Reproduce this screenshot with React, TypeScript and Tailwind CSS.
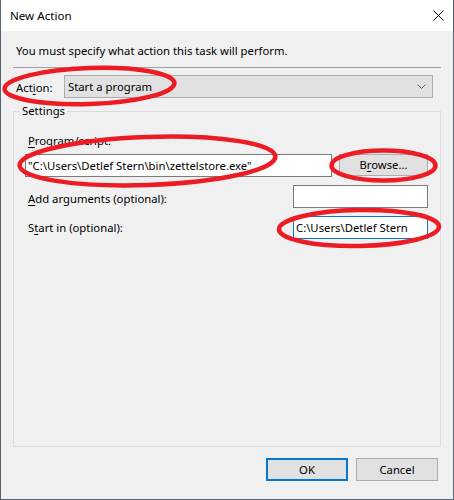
import React from 'react';

const Key: React.FC<{ children: React.ReactNode }> = ({ children }) => (
  <span className="underline underline-offset-[2px] decoration-1">{children}</span>
);

const TextBox: React.FC<{ value?: string; focused?: boolean; className?: string }> = ({
  value,
  focused,
  className,
}) => (
  <div
    className={`h-[23px] bg-white border flex items-center pl-[2px] overflow-hidden whitespace-nowrap ${
      focused ? 'border-[#0078d7]' : 'border-[#7a7a7a]'
    } ${className ?? ''}`}
  >
    {value}
  </div>
);

export default function App() {
  return (
    <div className="relative w-[454px] h-[500px] flex flex-col bg-[#f0f0f0] border-l border-r border-b border-[#5a6470] font-['Noto_Sans','Segoe_UI',sans-serif] text-[11.3px] leading-[16px] text-black">
      {/* Title bar */}
      <div className="h-[31px] bg-white flex items-center justify-between pl-[9px] pr-[9px] shrink-0">
        <span className="text-[11.6px]">New Action</span>
        <svg width="11" height="11" viewBox="0 0 11 11" className="mr-[0px]">
          <path d="M0.5 0.5 L10.5 10.5 M10.5 0.5 L0.5 10.5" stroke="#000" strokeWidth="1" fill="none" />
        </svg>
      </div>

      {/* Body */}
      <div className="flex flex-col flex-1">
        <p className="mt-[12px] pl-[15px]">You must specify what action this task will perform.</p>

        <div className="mx-[12px] mt-[8px] h-px bg-[#a0a0a0]" />

        {/* Action row */}
        <div className="mt-[7px] pl-[15px] flex items-center">
          <span className="w-[48px] pt-[2px]">
            Act<Key>i</Key>on:
          </span>
          <div className="w-[369px] h-[23px] bg-[#e1e1e1] border border-[#adadad] flex items-center justify-between pl-[3px] pr-[6px]">
            <span>Start a program</span>
            <svg width="9" height="5" viewBox="0 0 9 5">
              <path d="M0.5 0.5 L4.5 4.5 L8.5 0.5" stroke="#606060" strokeWidth="1" fill="none" />
            </svg>
          </div>
        </div>

        {/* Settings group */}
        <fieldset className="mx-[12px] mt-[5px] h-[344px] border border-[#dcdcdc] px-0 pb-0">
          <legend className="ml-[6px] px-[2px]">Settings</legend>

          <div className="pl-[14px] mt-[14px]">
            <Key>P</Key>rogram/script:
          </div>

          <div className="mt-[5px] pl-[11px] flex items-start">
            <TextBox value={'"C:\\Users\\Detlef Stern\\bin\\zettelstore.exe"'} className="w-[307px]" />
            <button className="ml-[7px] w-[89px] h-[22px] bg-[#e1e1e1] border border-[#adadad]">
              B<Key>r</Key>owse...
            </button>
          </div>

          <div className="mt-[8px] pl-[14px] pr-[12px] flex items-center justify-between">
            <span className="pt-[4px]">
              <Key>A</Key>dd arguments (optional):
            </span>
            <TextBox className="w-[135px]" />
          </div>

          <div className="mt-[8px] pl-[14px] pr-[12px] flex items-center justify-between">
            <span className="pt-[1px]">
              S<Key>t</Key>art in (optional):
            </span>
            <TextBox value="C:\Users\Detlef Stern" focused className="w-[135px]" />
          </div>
        </fieldset>

        {/* Buttons */}
        <div className="mt-[11px] pr-[15px] flex justify-end gap-[8px]">
          <button className="w-[82px] h-[23px] bg-[#e1e1e1] border-2 border-[#0078d7]">OK</button>
          <button className="w-[82px] h-[23px] bg-[#e1e1e1] border border-[#adadad]">Cancel</button>
        </div>
      </div>

      {/* Red annotation marks */}
      <svg
        className="absolute left-[-1px] top-0 pointer-events-none"
        width="454"
        height="500"
        viewBox="0 0 454 500"
      >
        <g fill="none" stroke="#ed1c24" strokeWidth="4.5">
          <ellipse cx="89.5" cy="86" rx="85" ry="18" transform="rotate(-2 89.5 86)" />
          <ellipse cx="147.5" cy="161" rx="128" ry="24" transform="rotate(-2 147.5 161)" />
          <ellipse cx="383.5" cy="165.5" rx="52" ry="15" />
          <ellipse cx="359" cy="228" rx="80" ry="18" transform="rotate(-1 359 228)" />
        </g>
      </svg>
    </div>
  );
}
